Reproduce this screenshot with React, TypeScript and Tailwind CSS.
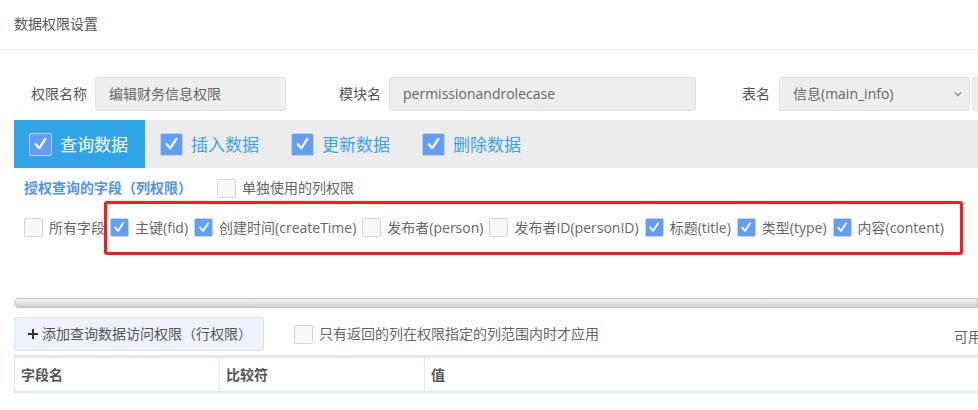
import React from "react";

const FONT = '"Open Sans","Noto Sans CJK SC",sans-serif';

function Check({ size = 19 }: { size?: number }) {
  return (
    <svg width={size * 0.74} height={size * 0.74} viewBox="0 0 16 16" fill="none">
      <path d="M3.6 8.6 L6.9 12.4 L12.6 3.6" stroke="#ffffff" strokeWidth="2.1" strokeLinecap="round" strokeLinejoin="round" />
    </svg>
  );
}

function Box({ checked, big }: { checked?: boolean; big?: boolean }) {
  const size = big ? "w-[23px] h-[23px]" : "w-[19px] h-[19px]";
  if (checked) {
    return (
      <span className={`${size} shrink-0 flex items-center justify-center rounded-[2px] border border-[#c8d0da] bg-[#609ef8]`}>
        <Check size={big ? 23 : 19} />
      </span>
    );
  }
  return <span className={`${size} shrink-0 rounded-[2px] border border-[#d4d4d4] bg-[#f8f8f8]`} />;
}

function Tab({ label, active }: { label: string; active?: boolean }) {
  return (
    <div className={`flex items-center gap-[8px] pl-[15px] pr-[17px] h-full ${active ? "bg-[#2fa4e6]" : ""}`}>
      <Box checked big />
      <span className={`text-[17px] leading-none ${active ? "text-white" : "text-[#3aa2ea]"}`}>{label}</span>
    </div>
  );
}

function Field({ label, checked }: { label: string; checked?: boolean }) {
  return (
    <div className="flex items-center gap-[6px] mr-[6px] shrink-0">
      <Box checked={checked} />
      <span className="text-[14px] leading-none text-[#666] whitespace-nowrap">{label}</span>
    </div>
  );
}

export default function App() {
  return (
    <div className="relative w-[978px] h-[410px] overflow-hidden bg-white" style={{ fontFamily: FONT }}>
      {/* header */}
      <div className="h-[50px] flex items-center pl-[14px] border-b border-[#e3e3ec]">
        <span className="text-[14px] text-[#555] leading-none -mt-[1px]">数据权限设置</span>
      </div>

      {/* form row */}
      <div className="mt-[27px] h-[34px] flex items-center pl-[31px] whitespace-nowrap">
        <span className="text-[14px] text-[#555] leading-none">权限名称</span>
        <div className="ml-[8px] w-[191px] h-full shrink-0 flex items-center pl-[13px] bg-[#eeeeee] border border-[#dfe4eb] rounded-[2px]">
          <span className="text-[14px] text-[#666] leading-none">编辑财务信息权限</span>
        </div>
        <span className="ml-[53px] text-[14px] text-[#555] leading-none">模块名</span>
        <div className="ml-[8px] w-[307px] h-full shrink-0 flex items-center pl-[13px] bg-[#eeeeee] border border-[#dfe4eb] rounded-[2px]">
          <span className="text-[14px] text-[#666] leading-none">permissionandrolecase</span>
        </div>
        <span className="ml-[46px] text-[14px] text-[#555] leading-none">表名</span>
        <div className="ml-[9px] w-[191px] h-full shrink-0 flex items-center justify-between pl-[13px] pr-[6px] bg-[#eeeeee] border border-[#dfe4eb] rounded-[2px]">
          <span className="text-[14px] text-[#666] leading-none">信息(main_info)</span>
          <svg width="10" height="10" viewBox="0 0 10 10" fill="none">
            <path d="M2 3.5 L5 6.5 L8 3.5" stroke="#8a8a8a" strokeWidth="1.4" />
          </svg>
        </div>
        <div className="ml-[2px] w-[60px] h-full shrink-0 bg-[#eeeeee] border border-[#dfe4eb] rounded-[2px]" />
      </div>

      {/* tab bar */}
      <div className="mt-[9px] ml-[14px] h-[48px] flex bg-[#ececec] whitespace-nowrap">
        <Tab label="查询数据" active />
        <Tab label="插入数据" />
        <Tab label="更新数据" />
        <Tab label="删除数据" />
      </div>

      {/* section label */}
      <div className="mt-[10px] h-[20px] flex items-center pl-[24px] whitespace-nowrap">
        <span className="text-[14px] font-bold text-[#4f95ea] leading-none w-[193px]">授权查询的字段（列权限）</span>
        <Box />
        <span className="ml-[6px] text-[14px] text-[#666] leading-none">单独使用的列权限</span>
      </div>

      {/* fields */}
      <div className="mt-[20px] h-[19px] flex items-center pl-[24px] whitespace-nowrap">
        <div className="flex items-center gap-[6px] shrink-0 w-[86px] overflow-hidden">
          <Box />
          <span className="text-[14px] leading-none text-[#666] whitespace-nowrap">所有字段</span>
        </div>
        <Field label="主键(fid)" checked />
        <Field label="创建时间(createTime)" checked />
        <Field label="发布者(person)" />
        <Field label="发布者ID(personID)" />
        <Field label="标题(title)" checked />
        <Field label="类型(type)" checked />
        <Field label="内容(content)" checked />
      </div>

      {/* scrollbar */}
      <div className="mt-[61px] ml-[14px] h-[10px] rounded-l-full border border-[#c4c4c4] bg-gradient-to-b from-[#f4f4f4] to-[#cfcfcf]" />

      {/* button row */}
      <div className="mt-[9px] ml-[14px] w-[1020px] h-[34px] flex items-center whitespace-nowrap">
        <div className="w-[250px] h-full shrink-0 flex items-center pl-[12px] bg-[#eef2fa] border border-[#dde4ef] rounded-[2px]">
          <svg width="12" height="12" viewBox="0 0 12 12" className="mr-[3px]">
            <path d="M6 1 V11 M1 6 H11" stroke="#333" strokeWidth="2" />
          </svg>
          <span className="text-[14px] text-[#555] leading-none">添加查询数据访问权限（行权限）</span>
        </div>
        <div className="ml-[30px] flex items-center gap-[6px]">
          <Box />
          <span className="text-[14px] text-[#666] leading-none">只有返回的列在权限指定的列范围内时才应用</span>
        </div>
        <span className="ml-auto w-[80px] mt-[6px] text-[14px] text-[#666] leading-none">可用字段：</span>
      </div>

      {/* table header */}
      <div className="mt-[4px] ml-[14px] w-[1100px] flex border-t-[3px] border-b-2 border-l border-[#e0e6ef] h-[38px] whitespace-nowrap">
        <div className="w-[205px] h-full flex items-center pl-[6px] border-r border-[#e0e6ef]">
          <span className="text-[14px] font-bold text-[#555] leading-none">字段名</span>
        </div>
        <div className="w-[205px] h-full flex items-center pl-[6px] border-r border-[#e0e6ef]">
          <span className="text-[14px] font-bold text-[#555] leading-none">比较符</span>
        </div>
        <div className="flex-1 h-full flex items-center pl-[6px]">
          <span className="text-[14px] font-bold text-[#555] leading-none">值</span>
        </div>
      </div>

      {/* red annotation box */}
      <div className="absolute left-[104px] top-[201px] w-[859px] h-[54px] border-[3px] border-[#ff1a1a] rounded-[3px] pointer-events-none" />
    </div>
  );
}
